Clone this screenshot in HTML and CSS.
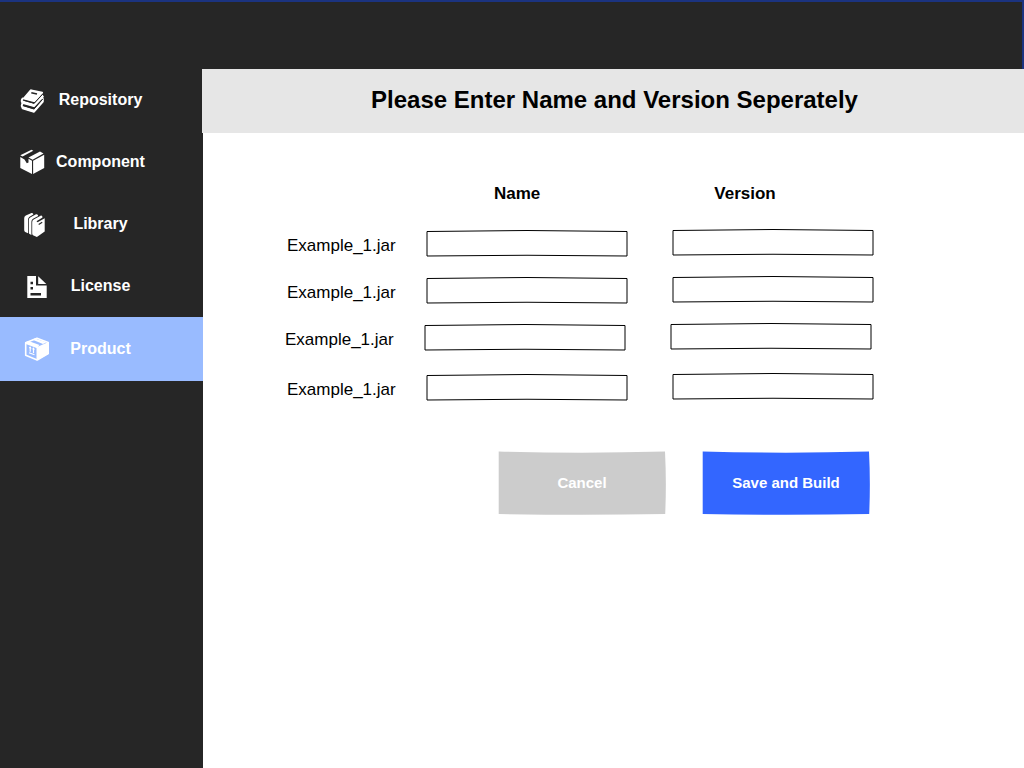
FILE: index.html
```html
<!DOCTYPE html>
<html lang="en">
<head>
<meta charset="utf-8">
<meta name="viewport" content="width=device-width, initial-scale=1">
<title>Please Enter Name and Version Seperately</title>
<link rel="stylesheet" href="styles.css">
</head>
<body>
<svg class="defs" aria-hidden="true">
  <symbol id="frame" viewBox="0 0 202 28">
    <path d="M1 2.500Q101 .5 201 2.500V27Q101 25.500 1 27Z" fill="#fff" stroke="#000" stroke-width="1" stroke-linejoin="round"/>
  </symbol>
  <symbol id="plate" viewBox="0 0 168 64">
    <path d="M.7 .5Q84 2.800 167 .5Q168.600 31 167.200 63Q84 64.600 .7 63Z" fill="currentColor"/>
  </symbol>
</svg>
<header class="topbar"></header>
<div class="layout">
  <nav class="sidebar">
    <a class="item" href="#repository">
      <svg class="icon" viewBox="0 0 26 26" aria-hidden="true">
        <path fill="#fff" d="M9.600 3.200Q10.300 2.200 11.500 2.400L22.500 4.800Q23.500 5.200 22.900 6.200L15.200 14.700Q14.500 15.300 13.500 15L3 12.200Q2.300 11.800 3 11Z"/>
        <path d="M11.300 5.700L17 7" stroke="#262626" stroke-width="1.600"/>
        <path fill="none" stroke="#fff" stroke-width="2" stroke-linejoin="round" stroke-linecap="round" d="M2.600 11.500Q1 13.500 2.400 15.800L14 19L22.800 9.500M2.300 16.500Q1 19 2.600 21.200L14 24.700L22.800 14.500V11.500"/>
        <path fill="#fff" d="M2 13.200L14 16.800L23 7V9.500L14 19.500L2.500 16.200ZM2.500 19L14 22.500L23 12.200V14.500L14 25.200L2.500 21.700Z"/>
        <path fill="none" stroke="#262626" stroke-width="1" d="M3.500 13.300L14.200 16.300L23 6.800M3.500 18.600L14.200 21.800L23 11.800"/>
      </svg>
      <span class="name">Repository</span>
    </a>
    <a class="item" href="#component">
      <svg class="icon" viewBox="0 0 26 26" aria-hidden="true">
        <g fill="#fff">
          <path d="M.3 6.300L11.500 .8L13.300 1.800L2.500 7.600Z"/>
          <path d="M.3 8L4.500 10.500L6.800 14.200L8.500 13.500V9.800L12 11.700V25L.3 19Z"/>
          <path d="M8.500 8.500L20 2.600L23.500 4.600L12.600 10.700Z"/>
          <path d="M13.100 11.700L24.200 5.700V19L13.100 25Z"/>
        </g>
      </svg>
      <span class="name">Component</span>
    </a>
    <a class="item inset" href="#library">
      <svg class="icon" viewBox="0 0 26 26" aria-hidden="true">
        <g fill="#fff">
          <path d="M.2 7.500Q0 5.400 1.800 4.500L7.500 2Q9.400 1.700 9.300 3.500L5.200 6Q4 7 4 9V22.300L1.200 21Q.2 20.400 .2 19Z"/>
          <path d="M4.800 9Q4.800 7.300 6.200 6.500L12 3.300Q14.200 3 14.200 5L9 7.700Q7.400 8.700 7.400 10.800V24L5.600 23Q4.800 22.500 4.800 21.500Z"/>
          <path d="M8.200 11Q8.200 9.200 9.700 8.400L17 4.600Q18.500 4.500 18.500 6.500L12.500 10.200L13.600 11.200L20.700 7.300V20.500L12.900 26L9 24.200Q8.200 23.700 8.200 22.600Z"/>
        </g>
        <path fill="none" stroke="#262626" stroke-width="1.200" d="M14.700 13.500L18.200 11.200"/>
      </svg>
      <span class="name">Library</span>
    </a>
    <a class="item inset" href="#license">
      <svg class="icon" viewBox="0 0 26 26" aria-hidden="true">
        <path fill="#fff" d="M3.300 3H12V12.500H22.700V25H3.300Z"/>
        <path fill="#fff" d="M14.200 3.300L22.300 11H14.200Z"/>
        <path fill="#262626" d="M6.500 8.800H9V11.200H6.500ZM6.500 14H9V16.400H6.500ZM6.500 20H17V22.400H6.500Z"/>
      </svg>
      <span class="name">License</span>
    </a>
    <a class="item inset active" href="#product" aria-current="page">
      <svg class="icon" viewBox="0 0 26 26" aria-hidden="true">
        <path fill="none" stroke="#fff" stroke-width="1.600" stroke-linejoin="round" d="M1.700 6.800L13 2.200L24.200 6.500V17.500L13.200 24L1.700 19.300Z"/>
        <path fill="#fff" d="M12.500 11.300L24.500 6V18L12.500 24.500ZM1.200 6.200L4.500 5L15.500 9L12.500 12L1.200 7.800ZM8 3.600L10.800 2.500L22.300 6.300L19 8Z"/>
        <path fill="none" stroke="#fff" stroke-width="1.200" d="M6.200 11V15.800M9.500 12.200V17M5 16.800L10.500 18.700"/>
        <path fill="#fff" d="M6.200 10.200L7.600 12.700L4.800 12ZM9.500 11.300L10.900 13.800L8.100 13.200Z"/>
      </svg>
      <span class="name">Product</span>
    </a>
  </nav>
  <main class="content">
    <h1 class="title">Please Enter Name and Version Seperately</h1>
    <form class="form">
      <div class="heads">
        <span class="head" id="col-name">Name</span>
        <span class="head" id="col-version">Version</span>
      </div>
      <div class="row">
        <label class="label" id="jar1" for="name1">Example_1.jar</label>
        <span class="field low"><svg class="frame" aria-hidden="true"><use href="#frame"/></svg><input class="input" id="name1" type="text" aria-labelledby="jar1 col-name"></span>
        <span class="field"><svg class="frame" aria-hidden="true"><use href="#frame"/></svg><input class="input" type="text" aria-labelledby="jar1 col-version"></span>
      </div>
      <div class="row">
        <label class="label" id="jar2" for="name2">Example_1.jar</label>
        <span class="field low"><svg class="frame" aria-hidden="true"><use href="#frame"/></svg><input class="input" id="name2" type="text" aria-labelledby="jar2 col-name"></span>
        <span class="field"><svg class="frame" aria-hidden="true"><use href="#frame"/></svg><input class="input" type="text" aria-labelledby="jar2 col-version"></span>
      </div>
      <div class="row outdent">
        <label class="label" id="jar3" for="name3">Example_1.jar</label>
        <span class="field low"><svg class="frame" aria-hidden="true"><use href="#frame"/></svg><input class="input" id="name3" type="text" aria-labelledby="jar3 col-name"></span>
        <span class="field"><svg class="frame" aria-hidden="true"><use href="#frame"/></svg><input class="input" type="text" aria-labelledby="jar3 col-version"></span>
      </div>
      <div class="row">
        <label class="label" id="jar4" for="name4">Example_1.jar</label>
        <span class="field low"><svg class="frame" aria-hidden="true"><use href="#frame"/></svg><input class="input" id="name4" type="text" aria-labelledby="jar4 col-name"></span>
        <span class="field"><svg class="frame" aria-hidden="true"><use href="#frame"/></svg><input class="input" type="text" aria-labelledby="jar4 col-version"></span>
      </div>
      <div class="actions">
        <button class="button cancel" type="button"><svg class="plate" aria-hidden="true"><use href="#plate"/></svg><span class="caption">Cancel</span></button>
        <button class="button save" type="submit"><svg class="plate" aria-hidden="true"><use href="#plate"/></svg><span class="caption">Save and Build</span></button>
      </div>
    </form>
  </main>
</div>
</body>
</html>
```

FILE: styles.css
```css
* {
  box-sizing: border-box;
}

body {
  margin: 0;
  min-height: 100vh;
  display: flex;
  flex-direction: column;
  font-family: "Liberation Sans", Arial, sans-serif;
  color: #000;
  background: #fff;
}

.defs {
  position: absolute;
  width: 0;
  height: 0;
}

.topbar {
  height: 69px;
  background: #262626;
  border-top: 2px solid #1b3380;
  border-right: 2px solid #1b3380;
}

.layout {
  flex: 1;
  display: flex;
}

.sidebar {
  flex: none;
  width: 203px;
  background: #262626;
}

.item {
  display: grid;
  grid-template-columns: 56px 1fr 58px;
  align-items: center;
  height: 62px;
  color: #fff;
  font-size: 16px;
  font-weight: bold;
  line-height: 20px;
  text-decoration: none;
}

.icon {
  width: 26px;
  height: 26px;
  margin-left: 20px;
  overflow: visible;
}

.inset .icon {
  margin-left: 24px;
}

.name {
  text-align: center;
}

.active {
  height: 64px;
  background: #99bbff;
}

.content {
  flex: 1;
  min-width: 0;
}

.title {
  margin: 0 0 0 -1px;
  padding: 17px 16px 19px 19px;
  background: #e6e6e6;
  font-size: 24px;
  line-height: 28px;
  text-align: center;
}

.form {
  padding: 51px 16px 32px 84px;
}

.heads {
  display: flex;
  gap: 174px;
  padding-left: 207px;
  margin-bottom: 24px;
}

.head {
  font-size: 17px;
  font-weight: bold;
  line-height: 20px;
}

.row {
  display: flex;
  align-items: flex-start;
  margin-bottom: 18px;
}

.outdent {
  margin-left: -2px;
  margin-bottom: 21px;
}

.label {
  width: 139px;
  padding-top: 8px;
  font-size: 17px;
  line-height: 20px;
}

.field {
  position: relative;
  width: 202px;
  height: 28px;
}

.field + .field {
  margin-left: 44px;
}

.low {
  margin-top: 1px;
}

.frame,
.plate {
  position: absolute;
  inset: 0;
  width: 100%;
  height: 100%;
}

.input {
  position: relative;
  width: 100%;
  height: 100%;
  padding: 0 8px;
  border: 0;
  background: transparent;
  font: inherit;
}

.actions {
  display: flex;
  gap: 36px;
  padding-top: 32px;
  padding-left: 211px;
}

.button {
  position: relative;
  width: 168px;
  height: 64px;
  padding: 0 0 2px;
  border: 0;
  background: transparent;
  font-family: inherit;
  font-size: 15px;
  font-weight: bold;
}

.caption {
  position: relative;
  color: #fff;
}

.cancel {
  color: #cccccc;
}

.save {
  color: #3366ff;
}
```
